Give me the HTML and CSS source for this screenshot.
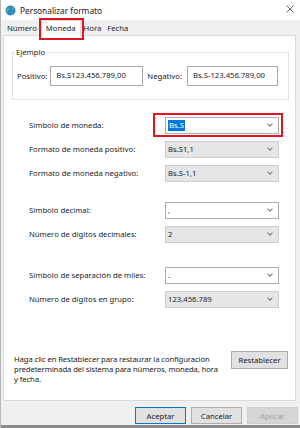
FILE: index.html
```html
<!DOCTYPE html>
<html lang="es">
<head>
<meta charset="UTF-8">
<meta name="viewport" content="width=device-width, initial-scale=1.0">
<title>Personalizar formato</title>
<link rel="stylesheet" href="styles.css">
</head>
<body>
<div class="window">
  <div class="titlebar">
    <svg class="app-icon" width="11" height="11" viewBox="0 0 11 11">
      <circle cx="5.5" cy="5.5" r="5" fill="#2f7fd0"/>
      <path d="M2 3.5 C3 2 4.5 2.5 4.5 3.8 C4.5 5 3 5 3.2 6.5 C3.4 8 2 8 1.4 6.8 Z" fill="#5cb85c"/>
      <path d="M6.5 1.5 C8 2 9.5 3.5 9 5 C8 5.5 7 4.5 6.3 3.2 Z" fill="#5cb85c"/>
      <path d="M6.5 6.5 C7.5 6.5 8 7.5 7.5 9 C6.8 9.5 6 8 6.5 6.5 Z" fill="#5cb85c"/>
    </svg>
    <span class="title">Personalizar formato</span>
    <svg class="close" width="8" height="8" viewBox="0 0 8 8">
      <path d="M0.5 0.5 L7.5 7.5 M7.5 0.5 L0.5 7.5" stroke="#555" stroke-width="0.9"/>
    </svg>
  </div>

  <div class="tabs">
    <span class="tab">Número</span>
    <span class="tab active marked">Moneda</span>
    <span class="tab">Hora</span>
    <span class="tab">Fecha</span>
  </div>

  <div class="panel">
    <fieldset class="sample">
      <legend>Ejemplo</legend>
      <span class="sample-label">Positivo:</span>
      <div class="textbox positive">Bs.S123.456.789,00</div>
      <span class="sample-label neg-label">Negativo:</span>
      <div class="textbox negative">Bs.S-123.456.789,00</div>
    </fieldset>

    <div class="group group-currency">
      <div class="row">
        <span class="row-label">Símbolo de moneda:</span>
        <div class="combo editable marked"><span class="selected-text">Bs.S</span><span class="chev"></span></div>
      </div>
      <div class="row">
        <span class="row-label">Formato de moneda positivo:</span>
        <div class="combo"><span>Bs.S1,1</span><span class="chev"></span></div>
      </div>
      <div class="row">
        <span class="row-label">Formato de moneda negativo:</span>
        <div class="combo"><span>Bs.S-1,1</span><span class="chev"></span></div>
      </div>
    </div>

    <div class="group group-decimal">
      <div class="row">
        <span class="row-label">Símbolo decimal:</span>
        <div class="combo editable"><span>,</span><span class="chev"></span></div>
      </div>
      <div class="row">
        <span class="row-label">Número de dígitos decimales:</span>
        <div class="combo"><span>2</span><span class="chev"></span></div>
      </div>
    </div>

    <div class="group group-thousands">
      <div class="row">
        <span class="row-label">Símbolo de separación de miles:</span>
        <div class="combo editable"><span>.</span><span class="chev"></span></div>
      </div>
      <div class="row">
        <span class="row-label">Número de dígitos en grupo:</span>
        <div class="combo"><span>123.456.789</span><span class="chev"></span></div>
      </div>
    </div>

    <div class="reset">
      <p>Haga clic en Restablecer para restaurar la configuración predeterminada del sistema para números, moneda, hora y fecha.</p>
      <button class="btn reset-btn">Restablecer</button>
    </div>
  </div>

  <div class="actions">
    <button class="btn default">Aceptar</button>
    <button class="btn">Cancelar</button>
    <button class="btn disabled">Aplicar</button>
  </div>
  <div class="taskbar"></div>
</div>
</body>
</html>
```

FILE: styles.css
```css
:root {
  --text: #1b1b1b;
  --mark: #e0161f;
  --panel-border: #dadada;
  --fs: 7.7px;
}

body {
  margin: 0;
  background: #f0f0f0;
  font-family: "Noto Sans", "Open Sans", sans-serif;
  font-size: var(--fs);
  color: var(--text);
}

.window {
  width: 300px;
  height: 428px;
  overflow: hidden;
  display: flex;
  flex-direction: column;
  border-left: 1px solid #b8b8b8;
  box-sizing: border-box;
}

.titlebar {
  height: 20px;
  flex-shrink: 0;
  background: #fff;
  display: flex;
  align-items: center;
  padding-left: 4px;
}

.app-icon {
  margin-right: 4px;
}

.title {
  font-size: 8.3px;
  color: #222;
}

.close {
  margin-left: auto;
  margin-right: 6px;
  margin-top: -3px;
}

.tabs {
  height: 15px;
  flex-shrink: 0;
  display: flex;
  align-items: flex-end;
  padding-left: 3px;
}

.tab {
  height: 13px;
  line-height: 12px;
  padding: 0 3px;
}

.tab.active {
  position: relative;
  height: 15px;
  line-height: 15px;
  background: #fff;
  border: 1px solid var(--panel-border);
  border-bottom: none;
  padding: 0 4px;
  margin: 0 0 -1px 1px;
  z-index: 1;
}

.marked::after {
  content: "";
  position: absolute;
  border: 2px solid var(--mark);
}

.tab.marked::after {
  left: -3px;
  right: -4px;
  top: -3px;
  bottom: -4px;
}

.panel {
  height: 366px;
  flex-shrink: 0;
  margin: 0 4px 0 2px;
  background: #fff;
  border: 1px solid var(--panel-border);
  box-sizing: border-box;
  display: flex;
  flex-direction: column;
}

.sample {
  margin: 11px 6px 0 8px;
  padding: 9px 5px 13px 4px;
  border: 1px solid #e2e2e2;
  display: flex;
  align-items: center;
}

.sample legend {
  padding: 0 1px;
  margin-left: -2px;
}

.textbox {
  height: 20px;
  line-height: 16px;
  box-sizing: border-box;
  border: 1px solid #a8a8a8;
  padding-left: 5px;
}

.textbox.positive {
  width: 93px;
  margin-left: 3px;
}

.neg-label {
  margin-left: 4px;
}

.textbox.negative {
  width: 91px;
  margin-left: 5px;
}

.group {
  padding-left: 25px;
}

.group-currency {
  margin-top: 13px;
}

.group-decimal {
  margin-top: 13px;
}

.group-thousands {
  margin-top: 17px;
}

.row {
  height: 24px;
  display: flex;
  align-items: center;
}

.row-label {
  width: 136px;
  flex-shrink: 0;
}

.combo {
  position: relative;
  width: 114px;
  height: 17px;
  box-sizing: border-box;
  border: 1px solid #cdcdcd;
  background: #e6e6e6;
  display: flex;
  align-items: center;
  padding-left: 2px;
}

.combo.editable {
  background: #fff;
  border-color: #adadad;
}

.combo.marked::after {
  left: -13px;
  right: -5px;
  top: -5px;
  bottom: -4px;
}

.selected-text {
  background: #0078d7;
  color: #fff;
  padding: 0 1px;
  line-height: 11px;
}

.chev {
  margin-left: auto;
  margin-right: 6px;
  width: 3px;
  height: 3px;
  border-right: 1px solid #777;
  border-bottom: 1px solid #777;
  transform: rotate(45deg);
  margin-top: -2px;
}

.reset {
  margin-top: 40px;
  padding: 0 7px 0 10px;
  display: flex;
  align-items: flex-start;
}

.reset p {
  margin: 3px 0 0;
  width: 204px;
  flex-shrink: 0;
  line-height: 10.2px;
  letter-spacing: -0.1px;
}

.btn {
  font-family: inherit;
  font-size: var(--fs);
  color: var(--text);
  background: #e1e1e1;
  border: 1px solid #adadad;
  height: 18px;
  padding: 0;
  box-sizing: border-box;
}

.reset-btn {
  margin-left: auto;
  width: 57px;
}

.actions {
  display: flex;
  justify-content: flex-end;
  gap: 5px;
  padding-right: 2px;
  margin-top: 6px;
}

.actions .btn {
  width: 51px;
  height: 17px;
}

.btn.default {
  border-color: #0078d7;
}

.btn.disabled {
  background: #d6d6d6;
  border-color: #cfcfcf;
  color: #a3a3a3;
}

.taskbar {
  margin-top: auto;
  height: 3px;
  background: #8c8c8c;
}
```
